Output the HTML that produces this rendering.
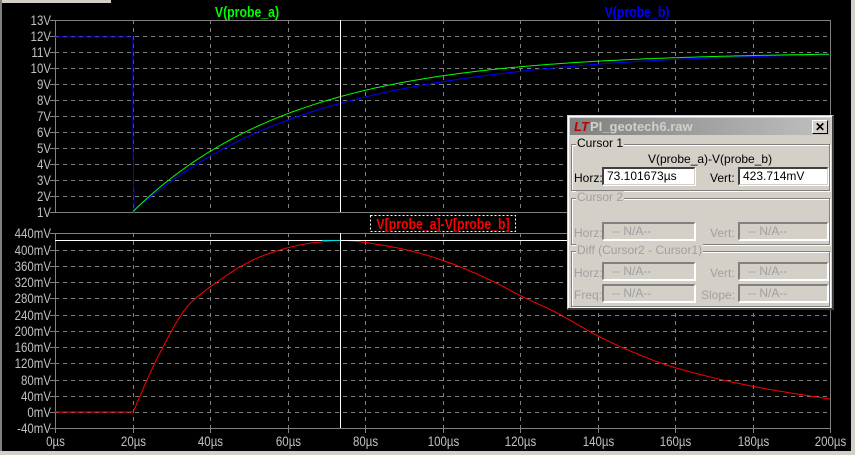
<!DOCTYPE html>
<html><head><meta charset="utf-8"><style>
html,body{margin:0;padding:0;background:#000;}
body{width:855px;height:455px;overflow:hidden;position:relative;font-family:"Liberation Sans",sans-serif;}
svg text{font-family:"Liberation Sans",sans-serif;}
.dlg{position:absolute;left:567px;top:115px;width:267px;height:195px;background:#d4d0c8;border:1px solid #d4d0c8;border-right:2px solid #404040;border-bottom:2px solid #404040;box-sizing:border-box;font-size:12px;box-shadow:inset 1px 1px 0 #fff;}
.tb{position:absolute;left:2px;top:2px;right:2px;height:17px;background:linear-gradient(90deg,#808080,#c0c0c0);color:#d4d0c8;font-weight:bold;font-size:13px;line-height:17px;padding-left:20px;}
.logo{position:absolute;left:4px;top:0;color:#c00000;font-style:italic;font-weight:bold;font-size:13px;}
.cls{position:absolute;right:2px;top:2px;width:14px;height:12px;background:#d4d0c8;border:1px solid #fff;border-right-color:#000;border-bottom-color:#000;color:#000;font-size:12px;line-height:12px;text-align:center;font-weight:bold;}
.grp{position:absolute;border:1px solid #808080;box-shadow:1px 1px 0 #fff,inset 1px 1px 0 #fff;}
.lg{position:absolute;background:#d4d0c8;padding:0 1px;font-size:12px;line-height:13px;}
.lab{position:absolute;font-size:12px;line-height:14px;}
.box{position:absolute;height:18px;background:#fff;border:2px solid #404040;border-right:1px solid #d4d0c8;border-bottom:1px solid #d4d0c8;box-sizing:border-box;font-size:12px;line-height:15px;padding-left:3px;color:#000;box-shadow:1px 1px 0 #fff;}
.dis{color:#a0a0a0;}
.dis .box{background:#d4d0c8;color:#a0a0a0;border-color:#808080;border-right-color:#fff;border-bottom-color:#fff;padding-left:8px;}
</style></head><body>
<svg id="s" width="855" height="455" style="position:absolute;left:0;top:0">
<rect x="0" y="0" width="855" height="455" fill="#000"/>
<rect x="0" y="0" width="111" height="3" fill="#d4d0c8"/>
<rect x="0" y="0" width="2" height="455" fill="#808080"/>
<rect x="0" y="451" width="855" height="4" fill="#d4d0c8"/>
<rect x="851" y="0" width="4" height="455" fill="#d4d0c8"/>
<g id="g"></g>
</svg>
<div class="dlg">
<div class="tb"><span class="logo">LT</span>PI_geotech6.raw<div class="cls">✕</div></div>
<div class="grp" style="left:3px;top:28px;width:257px;height:45px"></div>
<div class="lg" style="left:8px;top:21px">Cursor 1</div>
<div class="lab" style="left:80px;top:36px">V(probe_a)-V(probe_b)</div>
<div class="lab" style="left:6px;top:55px">Horz:</div>
<div class="box" style="left:34px;top:51px;width:93px">73.101673µs</div>
<div class="lab" style="left:142px;top:55px">Vert:</div>
<div class="box" style="left:170px;top:51px;width:90px">423.714mV</div>
<div class="dis">
<div class="grp" style="left:3px;top:82px;width:257px;height:45px"></div>
<div class="lg" style="left:8px;top:75px">Cursor 2</div>
<div class="lab" style="left:6px;top:110px">Horz:</div>
<div class="box" style="left:34px;top:106px;width:93px">-- N/A--</div>
<div class="lab" style="left:142px;top:110px">Vert:</div>
<div class="box" style="left:170px;top:106px;width:90px">-- N/A--</div>
<div class="grp" style="left:3px;top:135px;width:257px;height:54px"></div>
<div class="lg" style="left:8px;top:128px">Diff (Cursor2 - Cursor1)</div>
<div class="lab" style="left:6px;top:150px">Horz:</div>
<div class="box" style="left:34px;top:146px;width:93px">-- N/A--</div>
<div class="lab" style="left:142px;top:150px">Vert:</div>
<div class="box" style="left:170px;top:146px;width:90px">-- N/A--</div>
<div class="lab" style="left:6px;top:172px">Freq:</div>
<div class="box" style="left:34px;top:168px;width:93px">-- N/A--</div>
<div class="lab" style="left:133px;top:172px">Slope:</div>
<div class="box" style="left:170px;top:168px;width:90px">-- N/A--</div>
</div>
</div>
<script>
var g=document.getElementById('g'),h='';
var X0=55,X1=830;function X(t){return X0+(X1-X0)*t/200;}
var gray='#808080';
function line(x1,y1,x2,y2,c,d,w){h+='<line x1="'+x1+'" y1="'+y1+'" x2="'+x2+'" y2="'+y2+'" stroke="'+c+'" stroke-width="'+(w||1)+'"'+(d?' stroke-dasharray="4,4"':'')+'/>';}
function txt(x,y,s,c,a,fs,b){h+='<text x="'+x+'" y="'+y+'" fill="'+c+'" font-size="'+(fs||14)+'" text-anchor="'+(a||'end')+'"'+(b?' font-weight="bold"':'')+' transform="translate('+x+','+y+') scale(0.82,1) translate('+(-x)+','+(-y)+')">'+s+'</text>';}
for(var v=1;v<=13;v++){var y=20+(13-v)*16;line(X0,y+.5,X1,y+.5,gray,v!=1&&v!=13);line(X0-5,y+.5,X0,y+.5,gray);txt(X0-4,y+5,v+'V','#c0c0c0');}
for(var k=-1;k<=11;k++){var y=Math.round(412-k*16.25);line(X0,y+.5,X1,y+.5,gray,k!=-1&&k!=11);line(X0-5,y+.5,X0,y+.5,gray);txt(X0-4,y+5,(k*40)+'mV','#c0c0c0');}
for(var i=0;i<=10;i++){var x=Math.round(X(i*20))+.5;
 line(x,20,x,212,gray,i!=0&&i!=10);line(x,233,x,428,gray,i!=0&&i!=10);line(x,428,x,433,gray);
 txt(x,446,(i*20)+'µs','#c0c0c0','middle');}
var rp=[[133,412],[147,380],[163,347],[187,307],[220,280],[253,260],[287,248],[320,242],[353,241],[407,250],[450,263],[490,280],[523,297],[557,313],[600,337],[640,355],[673,367],[723,380],[773,390],[830,399]];
function cr(p0,p1,p2,p3,t){return 0.5*((2*p1)+(-p0+p2)*t+(2*p0-5*p1+4*p2-p3)*t*t+(-p0+3*p1-3*p2+p3)*t*t*t);}
var pts=[];
for(var i=0;i<rp.length-1;i++){var a=rp[Math.max(0,i-1)],b=rp[i],c=rp[i+1],d=rp[Math.min(rp.length-1,i+2)];
 if(i==0)a=[119,440];
 for(var s=0;s<10;s++){var t=s/10;pts.push([cr(a[0],b[0],c[0],d[0],t),cr(a[1],b[1],c[1],d[1],t)]);}}
pts.push(rp[rp.length-1]);
function ry(x){for(var i=0;i<pts.length-1;i++){if(x<=pts[i+1][0]){var a=pts[i],b=pts[i+1];return a[1]+(b[1]-a[1])*(x-a[0])/((b[0]-a[0])||1);}}return 399;}
var red='M55,412 L133,412';pts.forEach(function(p){red+=' L'+p[0].toFixed(1)+','+p[1].toFixed(1);});
var grn='',blu='M55,37 L133,37 L133,132 L134,212';
for(var x=133;x<=830;x+=3){var t=(x-X0)/(X1-X0)*200,tp=t-20;
 var va=1+10*(1-Math.exp(-tp/42));var d=(412-ry(x))/16.25*0.04;var vb=va-d;
 grn+=(grn?' L':'M')+x+','+(20+(13-va)*16).toFixed(1);
 if(x>134)blu+=' L'+x+','+(20+(13-vb)*16).toFixed(1);}
h+='<path d="'+blu+'" stroke="#0000ff" fill="none"/>';
h+='<path d="'+grn+'" stroke="#00ff00" fill="none"/>';
h+='<path d="'+red+'" stroke="#ff0000" fill="none"/>';
line(340.5,20,340.5,212,'#fff');line(340.5,233,340.5,428,'#fff');
line(X0,240.5,X1,240.5,'#fff');line(322,240.5,340,240.5,'#00e0e0');
txt(247,17,'V(probe_a)','#00ff00','middle',15,1);
txt(637,17,'V(probe_b)','#0000ff','middle',15,1);
h+='<rect x="370.5" y="215.5" width="145" height="16" fill="none" stroke="#fff" stroke-dasharray="2,2"/>';
txt(443,229,'V[probe_a]-V[probe_b]','#ff0000','middle',15,1);
g.innerHTML=h;
</script>
</body></html>
